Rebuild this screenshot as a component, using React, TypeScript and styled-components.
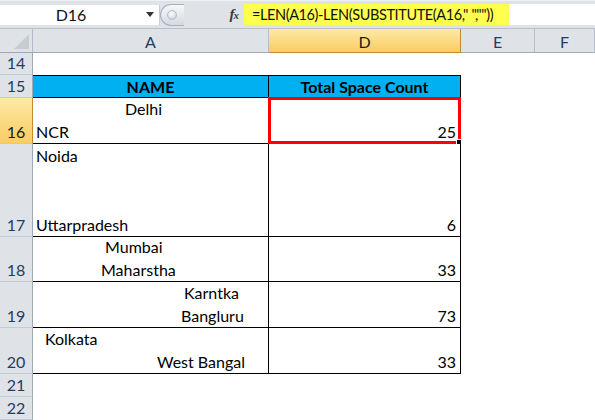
import React from "react";
import styled, { createGlobalStyle, css } from "styled-components";

const Global = createGlobalStyle`
  html, body { margin: 0; padding: 0; background: #fff; }
  body { width: 595px; height: 420px; overflow: hidden; font-family: "Lato", "Liberation Sans", sans-serif; }
  * { box-sizing: border-box; }
`;

const COLS = { head: 33, a: 236, d: 192, e: 74 };

const Page = styled.div`
  width: 595px;
  height: 420px;
  display: flex;
  flex-direction: column;
  overflow: hidden;
`;

const FormulaBar = styled.div`
  height: 29px;
  flex: none;
  display: flex;
  align-items: center;
  background: #dfe3e8;
  border-top: 1px solid #eef0f3;
  border-bottom: 1px solid #b9c0ca;
  padding: 0;
`;

const NameBox = styled.div`
  width: 160px;
  height: 20px;
  background: #fff;
  display: flex;
  align-items: center;
  border-right: 1px solid #c9ced6;
`;

const NameText = styled.span`
  width: 142px;
  text-align: center;
  font-size: 16px;
  color: #111;
`;

const Arrow = styled.span`
  width: 0;
  height: 0;
  border-left: 4px solid transparent;
  border-right: 4px solid transparent;
  border-top: 5px solid #333;
  margin-left: 4px;
`;

const Grip = styled.div`
  width: 24px;
  height: 22px;
  border: 1px solid #a8b0bb;
  border-right: none;
  border-radius: 12px 0 0 12px;
  background: linear-gradient(#f6f7f9, #d6dae1);
  display: flex;
  align-items: center;
  justify-content: flex-start;
  padding-left: 6px;
`;

const GripDot = styled.span`
  width: 10px;
  height: 10px;
  border-radius: 50%;
  background: radial-gradient(circle at 45% 35%, #ffffff, #c4c9d0);
  border: 1px solid #b7bdc6;
`;

const FxArea = styled.div`
  width: 60px;
  display: flex;
  justify-content: flex-end;
  padding-right: 6px;
`;

const Fx = styled.span`
  font-family: "Liberation Serif", "DejaVu Serif", serif;
  font-style: italic;
  font-weight: bold;
  font-size: 15px;
  color: #3a3a3a;
  letter-spacing: -1px;
  small { font-size: 11px; }
`;

const FormulaInput = styled.div`
  flex: 1;
  height: 21px;
  background: #fff;
  display: flex;
  align-items: center;
`;

const Highlight = styled.span`
  height: 21px;
  display: flex;
  align-items: center;
  padding: 0 16px 0 8px;
  background: #ffff50;
  font-size: 14.5px;
  letter-spacing: -0.4px;
  color: #111;
  white-space: pre;
`;

const Sheet = styled.div`
  display: flex;
  flex-direction: column;
  flex: 1;
`;

const Row = styled.div<{ $h: number }>`
  display: flex;
  height: ${(p) => p.$h}px;
  flex: none;
`;

const Corner = styled.div`
  width: ${COLS.head}px;
  height: 100%;
  background: #dfe3e8;
  border-right: 1px solid #b3bcc7;
  border-bottom: 1px solid #9ea9b6;
  display: flex;
  align-items: flex-end;
  justify-content: flex-end;
  padding: 0 3px 3px 0;
`;

const CornerTri = styled.span`
  width: 0;
  height: 0;
  border-left: 15px solid transparent;
  border-bottom: 15px solid #c6ccd4;
`;

const selectedHead = css`
  background: linear-gradient(#fde9a6, #f9cd62);
  color: #1a1a1a;
`;

const ColHead = styled.div<{ $w?: number; $sel?: boolean }>`
  ${(p) => (p.$w ? `width: ${p.$w}px;` : "flex: 1;")}
  height: 100%;
  background: #dfe3e8;
  border-right: 1px solid #b6bfca;
  border-bottom: 1px solid ${(p) => (p.$sel ? "#c28c30" : "#9ea9b6")};
  display: flex;
  align-items: center;
  justify-content: center;
  font-size: 16px;
  color: #223d60;
  padding-top: 1px;
  ${(p) => p.$sel && selectedHead}
  ${(p) => p.$sel && "border-right-color: #c28c30;"}
`;

const RowHead = styled.div<{ $sel?: boolean }>`
  width: ${COLS.head}px;
  flex: none;
  height: 100%;
  background: #dfe3e8;
  border-right: 1px solid ${(p) => (p.$sel ? "#c28c30" : "#9ea9b6")};
  border-bottom: 1px solid #c3cad3;
  display: flex;
  align-items: flex-end;
  justify-content: center;
  font-size: 16px;
  line-height: 22px;
  color: #223d60;
  ${(p) => p.$sel && selectedHead}
`;

const Cell = styled.div<{
  $w?: number;
  $table?: boolean;
  $head?: boolean;
  $top?: boolean;
  $right?: boolean;
}>`
  ${(p) => (p.$w ? `width: ${p.$w}px;` : "flex: 1;")}
  flex-shrink: 0;
  height: 100%;
  position: relative;
  display: flex;
  flex-direction: column;
  justify-content: flex-end;
  font-size: 16px;
  line-height: 23px;
  color: #000;
  ${(p) =>
    p.$table &&
    css`
      border-right: 1px solid #000;
      border-bottom: 1px solid #000;
    `}
  ${(p) => p.$top && "border-top: 1px solid #000;"}
  ${(p) =>
    p.$head &&
    css`
      background: #00b0f0;
      font-weight: bold;
      align-items: center;
      justify-content: center;
      line-height: 20px;
    `}
  ${(p) => p.$right && "align-items: flex-end; padding-right: 4px;"}
`;

const Line = styled.div<{ $indent: number }>`
  height: 23px;
  padding-left: ${(p) => p.$indent}px;
  white-space: pre;
`;

const Selection = styled.div`
  position: absolute;
  left: -1px;
  top: -1px;
  right: -1px;
  bottom: -1px;
  border: 3px solid #ff0000;
  pointer-events: none;
`;

const Handle = styled.div`
  position: absolute;
  right: -4px;
  bottom: -4px;
  width: 6px;
  height: 6px;
  background: #000;
  border: 1px solid #fff;
`;

type LineT = { t: string; x: number };
type RowT = {
  n: number;
  h: number;
  header?: boolean;
  lines?: LineT[];
  value?: string;
  selected?: boolean;
};

const rows: RowT[] = [
  { n: 14, h: 22 },
  { n: 15, h: 23, header: true },
  { n: 16, h: 46, lines: [{ t: "Delhi", x: 92 }, { t: "NCR", x: 3 }], value: "25", selected: true },
  {
    n: 17,
    h: 93,
    lines: [{ t: "Noida", x: 3 }, { t: "", x: 0 }, { t: "", x: 0 }, { t: "Uttarpradesh", x: 3 }],
    value: "6",
  },
  { n: 18, h: 45, lines: [{ t: "Mumbai", x: 72 }, { t: "Maharstha", x: 68 }], value: "33" },
  { n: 19, h: 46, lines: [{ t: "Karntka", x: 151 }, { t: "Bangluru", x: 148 }], value: "73" },
  { n: 20, h: 46, lines: [{ t: "Kolkata", x: 12 }, { t: "West Bangal", x: 124 }], value: "33" },
  { n: 21, h: 23 },
  { n: 22, h: 23 },
];

export default function App() {
  return (
    <Page>
      <Global />
      <FormulaBar>
        <NameBox>
          <NameText>D16</NameText>
          <Arrow />
        </NameBox>
        <Grip>
          <GripDot />
        </Grip>
        <FxArea>
          <Fx>
            f<small>x</small>
          </Fx>
        </FxArea>
        <FormulaInput>
          <Highlight>{'=LEN(A16)-LEN(SUBSTITUTE(A16," ",""))'}</Highlight>
        </FormulaInput>
      </FormulaBar>
      <Sheet>
        <Row $h={24}>
          <Corner>
            <CornerTri />
          </Corner>
          <ColHead $w={COLS.a}>A</ColHead>
          <ColHead $w={COLS.d} $sel>
            D
          </ColHead>
          <ColHead $w={COLS.e}>E</ColHead>
          <ColHead>F</ColHead>
        </Row>
        {rows.map((r) => {
          const inTable = r.header || !!r.lines;
          return (
            <Row key={r.n} $h={r.h}>
              <RowHead $sel={r.selected}>{r.n}</RowHead>
              {r.header ? (
                <>
                  <Cell $w={COLS.a} $table $head $top>
                    NAME
                  </Cell>
                  <Cell $w={COLS.d} $table $head $top>
                    Total Space Count
                  </Cell>
                </>
              ) : inTable ? (
                <>
                  <Cell $w={COLS.a} $table>
                    {r.lines!.map((l, i) => (
                      <Line key={i} $indent={l.x}>
                        {l.t}
                      </Line>
                    ))}
                  </Cell>
                  <Cell $w={COLS.d} $table $right>
                    <Line $indent={0}>{r.value}</Line>
                    {r.selected && (
                      <Selection>
                        <Handle />
                      </Selection>
                    )}
                  </Cell>
                </>
              ) : (
                <>
                  <Cell $w={COLS.a} />
                  <Cell $w={COLS.d} />
                </>
              )}
              <Cell $w={COLS.e} />
              <Cell />
            </Row>
          );
        })}
      </Sheet>
    </Page>
  );
}
